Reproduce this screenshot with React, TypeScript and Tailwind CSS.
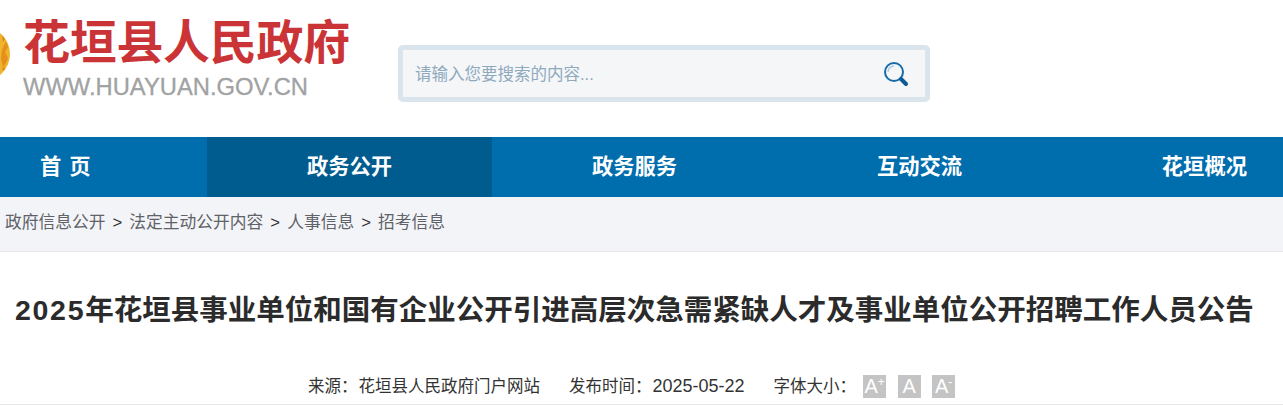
const cjk = '"Liberation Sans", "Noto Sans CJK SC", sans-serif'

const navItems = ['首 页', '政务公开', '政务服务', '互动交流', '花垣概况']
const crumbs = ['政府信息公开', '法定主动公开内容', '人事信息', '招考信息']

function FontButton({ mark }: { mark: string }) {
  return (
    <span className="flex h-[23px] w-[23px] items-center justify-center bg-[#c4c4c4] text-[20px] leading-none text-white">
      A{mark && <span className="mb-[9px] text-[12px] leading-none">{mark}</span>}
    </span>
  )
}

function SearchIcon() {
  return (
    <svg width="26" height="26" viewBox="0 0 26 26" fill="none">
      <circle cx="11" cy="11" r="9" stroke="#1a6ca8" strokeWidth="2" />
      <path d="M5 11a6 6 0 0 1 6-6" stroke="#a9cbe2" strokeWidth="1.5" />
      <path d="M18 18l5 5" stroke="#0f5a94" strokeWidth="4" strokeLinecap="round" />
    </svg>
  )
}

// only the right edge of the emblem shows in the picture
function Emblem() {
  return (
    <svg className="absolute left-[-44px] top-[27px]" width="54" height="54" viewBox="0 0 54 54">
      <circle cx="27" cy="27" r="27" fill="#f0b32c" />
      <path d="M50 14l2 6-3 5 3 6-2 5-3 4-2-8 1-9z" fill="#e58f1c" />
      <path d="M46 8l3 4-2 3zM46 42l3-3-1 5z" fill="#d9861a" />
    </svg>
  )
}

export default function App() {
  return (
    <div className="h-[407px] w-[1283px] overflow-hidden bg-white" style={{ fontFamily: cjk }}>
      <header className="relative flex h-[137px] items-start">
        <Emblem />
        <div className="ml-[23px] mt-[15px] w-[375px]">
          <div className="text-[47px] font-bold leading-[56px] tracking-[-0.3px] text-[#cb3436]">花垣县人民政府</div>
          <div className="mt-[1px] text-[23.75px] leading-[30px] text-[#a0a2a3] [-webkit-text-stroke:0.3px_#a0a2a3]">WWW.HUAYUAN.GOV.CN</div>
        </div>
        <div className="mt-[45px] flex h-[57px] w-[532px] items-center justify-between rounded-[5px] border-[5px] border-[#d9e4ec] bg-[#f4f6f8] pl-[12px] pr-[16px]">
          <span className="pt-[1px] text-[16.5px] text-[#8fa9bd]">请输入您要搜索的内容...</span>
          <SearchIcon />
        </div>
      </header>

      <nav className="flex h-[60px] bg-[#006dad] pt-[1px] text-[21.3px] font-bold text-white">
        <div className="flex w-[207px] items-center pl-[40px] [word-spacing:2px]">{navItems[0]}</div>
        <div className="mt-[-1px] flex w-[285px] items-center justify-center bg-[#005c8f] pt-[1px]">{navItems[1]}</div>
        <div className="flex w-[285px] items-center justify-center">{navItems[2]}</div>
        <div className="flex w-[285px] items-center justify-center">{navItems[3]}</div>
        <div className="flex flex-1 items-center justify-end pr-[36px]">{navItems[4]}</div>
      </nav>

      <div className="flex h-[55px] items-center gap-[7px] border-b border-[#e6e6e6] bg-[#f3f4f8] pb-[2px] pl-[5px] text-[16.75px] text-[#5f6368]">
        {crumbs.map((c, i) => (
          <div key={c} className="flex items-center gap-[7px]">
            {i > 0 && <span className="text-[#333]">&gt;</span>}
            <span>{c}</span>
          </div>
        ))}
      </div>

      <h1 className="mt-[38px] pl-[15px] text-[28.5px] font-bold leading-[40px] whitespace-nowrap text-[#2b2b2b]">
        <span className="tracking-[1.7px]">2025</span>年花垣县事业单位和国有企业公开引进高层次急需紧缺人才及事业单位公开招聘工作人员公告
      </h1>

      <div className="mt-[38px] flex h-[37px] items-center border-b border-[#e6e6e6] pl-[308px] text-[16.5px] text-[#333]">
        <span>来源：</span>
        <span className="ml-[1px]">花垣县人民政府门户网站</span>
        <span className="ml-[29px]">发布时间：</span>
        <span className="ml-[1px] text-[18px]">2025-05-22</span>
        <span className="ml-[29px]">字体大小：</span>
        <div className="ml-[7px] flex gap-[11.5px]">
          <FontButton mark="+" />
          <FontButton mark="" />
          <FontButton mark="-" />
        </div>
      </div>
    </div>
  )
}
